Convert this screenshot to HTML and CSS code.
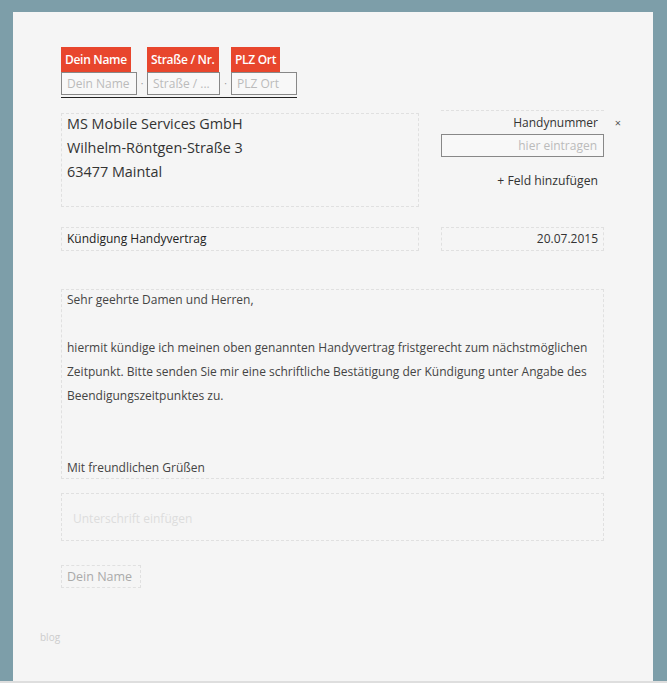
FILE: index.html
```html
<!DOCTYPE html>
<html lang="de">
<head>
  <meta charset="UTF-8" />
  <meta name="viewport" content="width=device-width, initial-scale=1.0"/>
  <title>Kündigung Handyvertrag</title>
  <link rel="stylesheet" href="styles.css">
</head>
<body>

  <div class="page">
    <div class="sender">
      <div class="sender-field">
        <div class="tag">Dein Name</div>
        <div class="input w-name">Dein Name</div>
      </div>
      <span class="sep">·</span>
      <div class="sender-field">
        <div class="tag">Straße / Nr.</div>
        <div class="input w-street">Straße / ...</div>
      </div>
      <span class="sep">·</span>
      <div class="sender-field">
        <div class="tag">PLZ Ort</div>
        <div class="input w-city">PLZ Ort</div>
      </div>
    </div>

    <div class="row head-row">
      <div class="box address">
        <div>MS Mobile Services GmbH</div>
        <div>Wilhelm-Röntgen-Straße 3</div>
        <div>63477 Maintal</div>
      </div>
      <div class="side">
        <div class="box phone">
          <div class="phone-label">Handynummer</div>
          <span class="remove">×</span>
          <div class="input phone-input">hier eintragen</div>
        </div>
        <div class="add-field">+ Feld hinzufügen</div>
      </div>
    </div>

    <div class="row subject-row">
      <div class="box subject">Kündigung Handyvertrag</div>
      <div class="box date">20.07.2015</div>
    </div>

    <div class="box letter">
      <p>Sehr geehrte Damen und Herren,</p>
      <p class="blank"></p>
      <p>hiermit kündige ich meinen oben genannten Handyvertrag fristgerecht zum nächstmöglichen</p>
      <p>Zeitpunkt. Bitte senden Sie mir eine schriftliche Bestätigung der Kündigung unter Angabe des</p>
      <p>Beendigungszeitpunktes zu.</p>
      <p class="blank"></p>
      <p class="blank"></p>
      <p>Mit freundlichen Grüßen</p>
    </div>

    <div class="box signature">Unterschrift einfügen</div>

    <div class="box signer">Dein Name</div>

    <div class="blog">blog</div>
  </div>

</body>
</html>
```

FILE: styles.css
```css
html {
  background-color: #dedede;
}

body {
  margin: 0;
  height: 681px;
  overflow: hidden;
  background-color: #7d9ea9;
  font-family: "Open Sans", "DejaVu Sans", sans-serif;
  color: #333;
}

.page {
  background-color: #f5f5f5;
  margin: 12px 14px 0 13px;
  padding: 35px 49px 0 48px;
  height: 634px;
}

/* Absender oben */
.sender {
  display: flex;
  align-items: flex-end;
  width: 236px;
  padding-bottom: 2px;
  border-bottom: 1px solid #222;
}

.sender-field {
  display: flex;
  flex-direction: column;
  align-items: flex-start;
}

.tag {
  background-color: #e8462d;
  color: #fff;
  font-size: 12px;
  font-weight: 600;
  letter-spacing: -0.3px;
  height: 25px;
  line-height: 25px;
  padding: 0 4px;
  white-space: nowrap;
}

.input {
  border: 1px solid #888;
  background-color: #f8f8f8;
  color: #bbb;
  font-size: 12px;
  height: 21px;
  line-height: 21px;
  padding: 0 5px;
  white-space: nowrap;
  overflow: hidden;
}

.w-name { width: 64px; }
.w-street { width: 61px; }
.w-city { width: 54px; }

.sep {
  color: #999;
  font-size: 10px;
  width: 10px;
  text-align: center;
  line-height: 23px;
}

.sep:last-of-type {
  width: 11px;
}

.box {
  border: 1px dashed #e0e0e0;
}

.row {
  display: flex;
  gap: 22px;
}

.head-row {
  margin-top: 15px;
}

.address {
  width: 346px;
  height: 92px;
  padding: 0 5px;
  font-size: 14.4px;
  line-height: 24px;
  color: #333;
}

.address div:first-child {
  margin-top: -2px;
}

.side {
  width: 163px;
  margin-top: -3px;
}

.phone {
  position: relative;
  text-align: right;
  border-bottom: none;
  border-left: none;
  border-right: none;
}

.phone-label {
  font-size: 12px;
  line-height: 23px;
  padding-right: 6px;
}

.remove {
  position: absolute;
  right: -17px;
  top: 0;
  font-size: 11px;
  line-height: 23px;
  color: #555;
}

.phone-input {
  text-align: right;
  padding: 0 6px;
}

.add-field {
  text-align: right;
  font-size: 12.2px;
  padding-right: 6px;
  margin-top: 14px;
  line-height: 20px;
}

.subject-row {
  margin-top: 20px;
}

.subject, .date {
  height: 22px;
  line-height: 22px;
  font-size: 12px;
  padding: 0 5px;
}

.subject {
  width: 346px;
  font-weight: 500;
  color: #222;
}

.date {
  width: 151px;
  text-align: right;
}

.letter {
  margin-top: 38px;
  height: 188px;
  padding: 0 5px;
  font-size: 12px;
  line-height: 24px;
  color: #444;
}

.letter p {
  margin: 0;
}

.letter p:first-child {
  margin-top: -2px;
}

.letter .blank {
  height: 24px;
}

.signature {
  margin-top: 14px;
  height: 42px;
  padding: 4px 11px 0;
  line-height: 42px;
  font-size: 12px;
  color: #ddd;
}

.signer {
  display: inline-block;
  margin-top: 24px;
  height: 21px;
  line-height: 21px;
  padding: 0 8px 0 5px;
  font-size: 12.5px;
  color: #aaa;
}

.blog {
  margin: 42px 0 0 -21px;
  font-size: 10px;
  line-height: 14px;
  color: #ccc;
}
```
